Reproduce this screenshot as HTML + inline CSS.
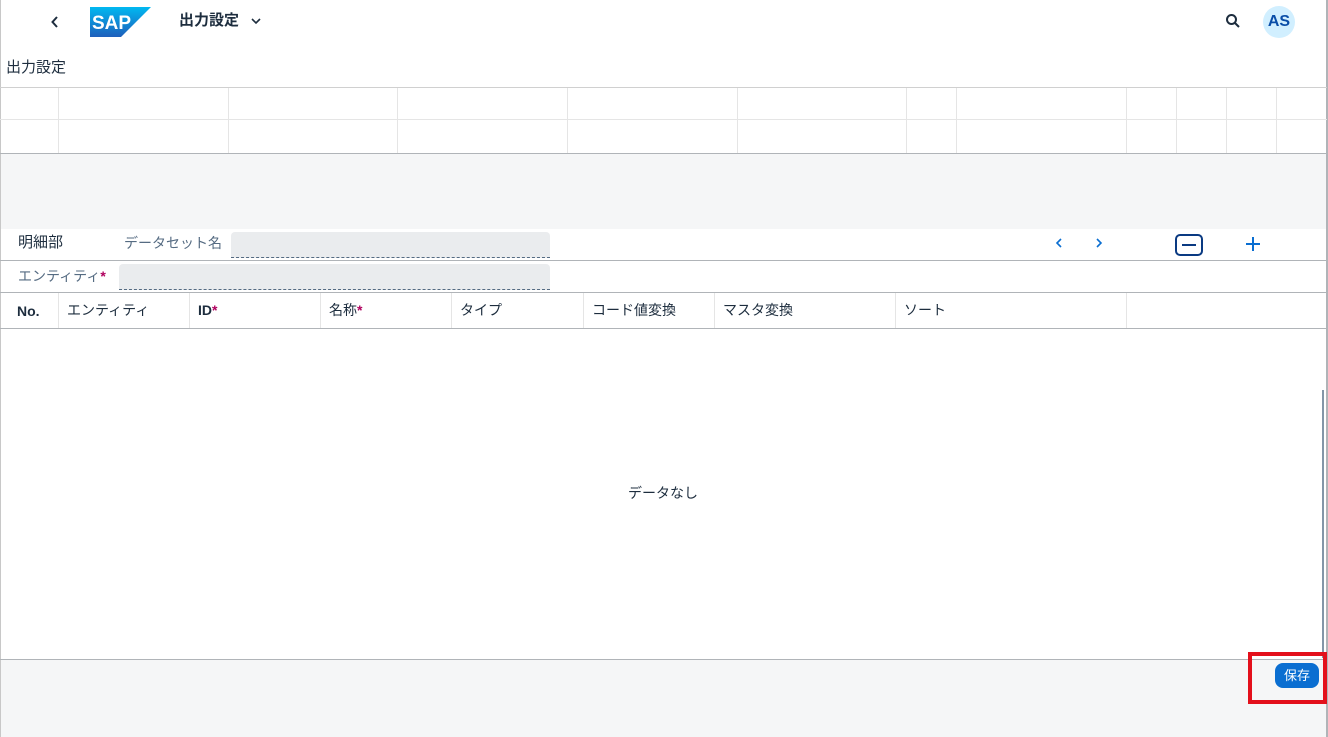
<!DOCTYPE html>
<html><head><meta charset="utf-8"><style>
*{margin:0;padding:0;box-sizing:border-box}
body{width:1328px;height:737px;overflow:hidden;background:#fff;font-family:"Liberation Sans","Noto Sans CJK JP",sans-serif;color:#1d2d3e;position:relative}
.a{position:absolute}
.vl{position:absolute;width:1px;background:#e5e5e5}
.hl{position:absolute;left:0;width:1327px;height:1px}
.t{position:absolute;font-size:14px;white-space:nowrap;line-height:18px}
.st{color:#b0005e;font-weight:bold}
</style></head><body>
<div class="a" style="left:0;top:0;width:1px;height:737px;background:#c8c8c8"></div>
<div class="a" style="left:1326px;top:0;width:2px;height:737px;background:#b0b4b8"></div>
<!-- shell -->
<svg class="a" style="left:49px;top:15px" width="12" height="14"><path d="M8 2l-4.5 5 4.5 5" stroke="#1d2d3e" stroke-width="2" fill="none"/></svg>
<svg class="a" style="left:90px;top:7px" width="61" height="30"><defs><linearGradient id="g" x1="0" y1="0" x2="0" y2="1"><stop offset="0" stop-color="#00b8f1"/><stop offset="1" stop-color="#1e5fbb"/></linearGradient></defs><polygon points="0,0 61,0 31,30 0,30" fill="url(#g)"/><text x="2" y="22" font-family="Liberation Sans" font-weight="bold" font-size="19" fill="#fff">SAP</text></svg>
<div class="t" style="left:179px;top:12px;font-size:15px;font-weight:bold">出力設定</div>
<svg class="a" style="left:250px;top:16px" width="12" height="10"><path d="M2 3l4 4 4-4" stroke="#1d2d3e" stroke-width="1.6" fill="none"/></svg>
<svg class="a" style="left:1225px;top:13px" width="16" height="16"><circle cx="6.5" cy="6.5" r="4.5" stroke="#1d2d3e" stroke-width="2" fill="none"/><path d="M10 10l4 4" stroke="#1d2d3e" stroke-width="2"/></svg>
<div class="a" style="left:1263px;top:6px;width:32px;height:32px;border-radius:50%;background:#d1efff;color:#0a4ea8;font-size:16px;font-weight:bold;text-align:center;line-height:32px">AS</div>
<div class="t" style="left:6px;top:59px;font-size:15px">出力設定</div>
<!-- top table -->
<div class="hl" style="top:87px;background:#d0d0d0"></div>
<div class="hl" style="top:119px;background:#e5e5e5"></div>
<div class="vl" style="left:58px;top:88px;height:65px"></div>
<div class="vl" style="left:228px;top:88px;height:65px"></div>
<div class="vl" style="left:397px;top:88px;height:65px"></div>
<div class="vl" style="left:567px;top:88px;height:65px"></div>
<div class="vl" style="left:737px;top:88px;height:65px"></div>
<div class="vl" style="left:906px;top:88px;height:65px"></div>
<div class="vl" style="left:956px;top:88px;height:65px"></div>
<div class="vl" style="left:1126px;top:88px;height:65px"></div>
<div class="vl" style="left:1176px;top:88px;height:65px"></div>
<div class="vl" style="left:1226px;top:88px;height:65px"></div>
<div class="vl" style="left:1276px;top:88px;height:65px"></div>
<div class="hl" style="top:153px;background:#b0b4b8"></div>
<div class="a" style="left:1px;top:154px;width:1325px;height:75px;background:#f5f6f7"></div>
<!-- detail -->
<div class="t" style="left:18px;top:234px;font-size:15px">明細部</div>
<div class="t" style="left:124px;top:234px;color:#556b82">データセット名</div>
<div class="a" style="left:231px;top:232px;width:319px;height:26px;background:#eaecee;border-radius:4px 4px 0 0;border-bottom:1px dashed #556b82"></div>
<svg class="a" style="left:1053px;top:236px" width="12" height="14"><path d="M8 3l-4 4 4 4" stroke="#0a6ed1" stroke-width="1.6" fill="none"/></svg>
<svg class="a" style="left:1093px;top:236px" width="12" height="14"><path d="M4 3l4 4-4 4" stroke="#0a6ed1" stroke-width="1.6" fill="none"/></svg>
<div class="a" style="left:1175px;top:234px;width:28px;height:22px;border:2px solid #0a3a82;border-radius:5px"></div>
<div class="a" style="left:1182px;top:244px;width:14px;height:2px;background:#0a3a82"></div>
<svg class="a" style="left:1245px;top:236px" width="16" height="16"><path d="M8 1v14M1 8h14" stroke="#0a6ed1" stroke-width="2"/></svg>
<div class="hl" style="top:260px;background:#b0b4b8"></div>
<div class="t" style="left:18px;top:267px;color:#556b82">エンティティ<span class="st">*</span></div>
<div class="a" style="left:119px;top:264px;width:431px;height:26px;background:#eaecee;border-radius:4px 4px 0 0;border-bottom:1px dashed #556b82"></div>
<div class="hl" style="top:292px;background:#b0b4b8"></div>
<div class="t" style="left:17px;top:302px;font-weight:bold">No.</div>
<div class="t" style="left:67px;top:301px">エンティティ</div>
<div class="t" style="left:198px;top:301px;font-weight:bold">ID<span class="st">*</span></div>
<div class="t" style="left:329px;top:301px">名称<span class="st">*</span></div>
<div class="t" style="left:460px;top:301px">タイプ</div>
<div class="t" style="left:592px;top:301px">コード値変換</div>
<div class="t" style="left:723px;top:301px">マスタ変換</div>
<div class="t" style="left:904px;top:301px">ソート</div>
<div class="vl" style="left:58px;top:293px;height:35px"></div>
<div class="vl" style="left:189px;top:293px;height:35px"></div>
<div class="vl" style="left:320px;top:293px;height:35px"></div>
<div class="vl" style="left:451px;top:293px;height:35px"></div>
<div class="vl" style="left:583px;top:293px;height:35px"></div>
<div class="vl" style="left:714px;top:293px;height:35px"></div>
<div class="vl" style="left:895px;top:293px;height:35px"></div>
<div class="vl" style="left:1126px;top:293px;height:35px"></div>
<div class="hl" style="top:328px;background:#b0b4b8"></div>
<div class="t" style="left:628px;top:484px">データなし</div>
<div class="a" style="left:1322px;top:390px;width:2px;height:268px;background:#8396a8"></div>
<div class="hl" style="top:659px;background:#b0b4b8"></div>
<div class="a" style="left:1px;top:660px;width:1325px;height:77px;background:#f5f6f7"></div>
<div class="a" style="left:1275px;top:663px;width:44px;height:25px;background:#0a6ed1;border-radius:8px;color:#fff;font-size:13px;text-align:center;line-height:25px">保存</div>
<div class="a" style="left:1248px;top:652px;width:79px;height:52px;border:4px solid #e3101b"></div>
</body></html>
